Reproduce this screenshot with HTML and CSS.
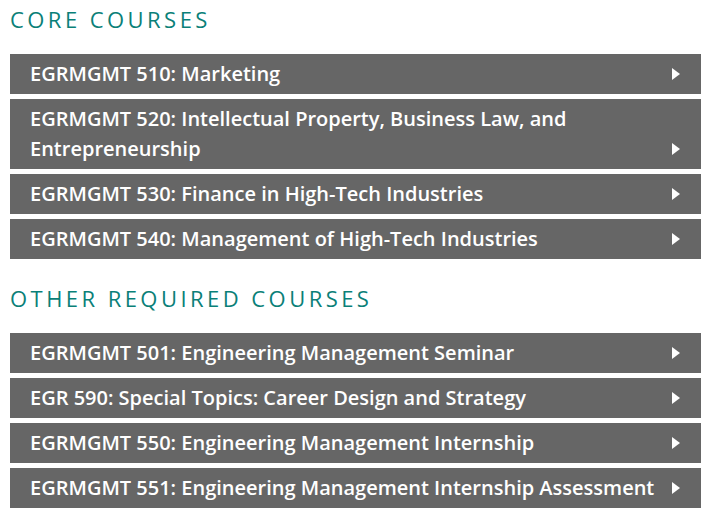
FILE: index.html
```html
<!DOCTYPE html>
<html lang="en">
<head>
<meta charset="utf-8">
<title>Courses</title>
<link rel="stylesheet" href="styles.css">
</head>
<body>
<main class="page">
  <section class="group">
    <h2 class="heading">CORE COURSES</h2>
    <ul class="list">
      <li class="item"><span class="name">EGRMGMT 510: Marketing</span><span class="caret"></span></li>
      <li class="item"><span class="name">EGRMGMT 520: Intellectual Property, Business Law, and Entrepreneurship</span><span class="caret"></span></li>
      <li class="item"><span class="name">EGRMGMT 530: Finance in High-Tech Industries</span><span class="caret"></span></li>
      <li class="item"><span class="name">EGRMGMT 540: Management of High-Tech Industries</span><span class="caret"></span></li>
    </ul>
  </section>
  <section class="group">
    <h2 class="heading">OTHER REQUIRED COURSES</h2>
    <ul class="list">
      <li class="item"><span class="name">EGRMGMT 501: Engineering Management Seminar</span><span class="caret"></span></li>
      <li class="item"><span class="name">EGR 590: Special Topics: Career Design and Strategy</span><span class="caret"></span></li>
      <li class="item"><span class="name">EGRMGMT 550: Engineering Management Internship</span><span class="caret"></span></li>
      <li class="item"><span class="name">EGRMGMT 551: Engineering Management Internship Assessment</span><span class="caret"></span></li>
    </ul>
  </section>
</main>
</body>
</html>
```
FILE: styles.css
```css
* { box-sizing: border-box; }
body {
  margin: 0;
  background: #ffffff;
  font-family: "Open Sans", "Liberation Sans", sans-serif;
}
.page {
  width: 691px;
  margin-left: 10px;
  padding-top: 4px;
}
.group + .group { margin-top: 24px; }
.heading {
  margin: 0 0 20px;
  font-size: 22px;
  line-height: 30px;
  font-weight: 400;
  letter-spacing: 3.45px;
  color: #0a8078;
}
.list {
  list-style: none;
  margin: 0;
  padding: 0;
  display: flex;
  flex-direction: column;
  gap: 5px;
}
.item {
  display: flex;
  align-items: flex-end;
  justify-content: space-between;
  gap: 12px;
  background: #666666;
  color: #ffffff;
  padding: 5px 21px 5px 20px;
  font-size: 20px;
  line-height: 30px;
  font-weight: 600;
}
.name { flex: 1; }
.caret {
  flex: none;
  width: 0;
  height: 0;
  margin-bottom: 9px;
  border-top: 6px solid transparent;
  border-bottom: 6px solid transparent;
  border-left: 8px solid #ffffff;
}
```
